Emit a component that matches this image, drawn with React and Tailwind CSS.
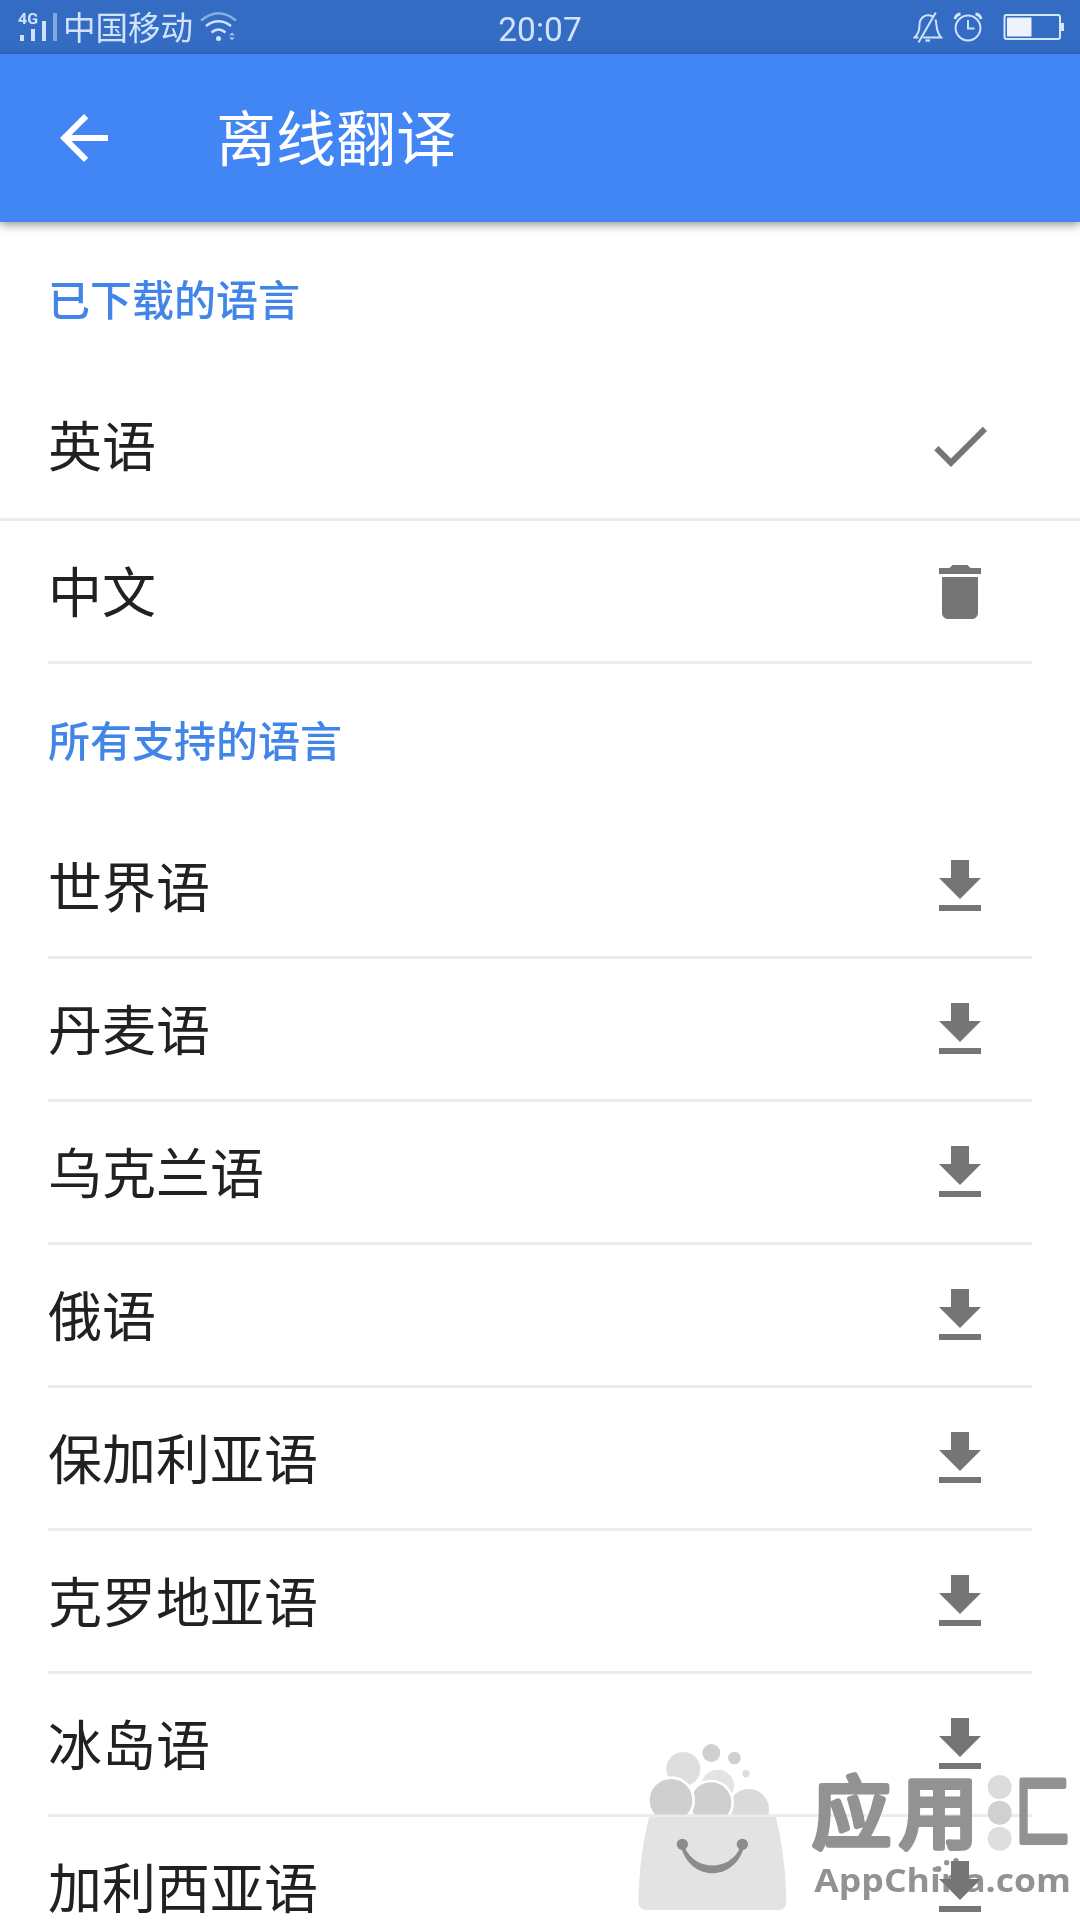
import React from 'react';
import { MdArrowBack, MdCheck, MdDelete, MdFileDownload } from 'react-icons/md';

const supportedLanguages = [
  '世界语',
  '丹麦语',
  '乌克兰语',
  '俄语',
  '保加利亚语',
  '克罗地亚语',
  '冰岛语',
  '加利西亚语',
];

const SignalIcon = () => (
  <svg width="40" height="54" viewBox="18 0 40 54" fill="#cfe3fc" className="shrink-0">
    <text x="18" y="24" fontSize="14" fontWeight="700" fontFamily="Roboto, sans-serif" textLength="20" lengthAdjust="spacingAndGlyphs">4G</text>
    <rect x="20" y="35" width="4" height="6" />
    <rect x="31" y="29" width="4" height="12" />
    <rect x="42" y="21" width="4" height="20" />
    <rect x="53" y="13" width="4" height="28" opacity="0.5" />
  </svg>
);

const WifiIcon = () => (
  <svg width="40" height="54" viewBox="199 0 40 54" fill="none" stroke="#cfe3fc" strokeWidth="2.6" className="ml-1.5 shrink-0">
    <path d="M201 20.5Q218.500 6 236 20.500" opacity="0.55" />
    <path d="M206 26Q218.500 16.500 231 26" />
    <path d="M211.500 32.500Q218.500 26.500 225.500 32.500" />
    <circle cx="218.500" cy="38.500" r="2.500" fill="#cfe3fc" stroke="none" />
    <path d="M229 35.200L232 32.800L235 35.200ZM229 37.500L232 40L235 37.500Z" fill="#cfe3fc" stroke="none" opacity="0.8" />
  </svg>
);

const MutedBellIcon = () => (
  <svg width="30" height="54" viewBox="913 0 30 54" fill="none" stroke="#cfe3fc" strokeWidth="2" className="shrink-0">
    <path d="M933 16.500C925 13 919.500 18 919.500 25C919.500 32 917.500 34 914.500 37.500H918.500" />
    <path d="M935.500 19.500C937 24 935.500 31 941 37.500H923" />
    <path d="M935.800 12.500L918.500 42.500" />
    <path d="M925.500 40.500H930" strokeWidth="2.200" />
  </svg>
);

const AlarmIcon = () => (
  <svg width="30" height="54" viewBox="953 0 30 54" fill="none" stroke="#cfe3fc" strokeWidth="2" className="shrink-0">
    <circle cx="968" cy="28" r="12.400" />
    <path d="M968 20V28.500H974.500" />
    <path d="M955 19Q956 14.500 960.500 14M981 19Q980 14.500 975.500 14" strokeWidth="3" />
  </svg>
);

const BatteryIcon = () => (
  <svg width="62" height="54" viewBox="1003 0 62 54" fill="none" stroke="#cfeafc" strokeWidth="2" className="shrink-0">
    <rect x="1004.500" y="15" width="55.500" height="24" rx="2" />
    <rect x="1007" y="17.500" width="24.500" height="19" fill="#eef2fb" stroke="none" />
    <rect x="1061" y="23" width="3" height="8" fill="#cfeafc" stroke="none" />
  </svg>
);

const StatusBar = () => (
  <div className="flex h-[54px] items-center justify-between bg-[#346bc3] pl-[18px] pr-[15px] text-[#cfe3fc]">
    <div className="flex w-[300px] items-center">
      <SignalIcon />
      <span className="ml-[5px] pb-0.5 text-[32.5px] leading-[52px]">中国移动</span>
      <WifiIcon />
    </div>
    <span className="pt-1.5 pr-[3px] font-[Roboto,sans-serif] text-[33.5px] leading-[48px]">20:07</span>
    <div className="flex w-[300px] items-center justify-end">
      <MutedBellIcon />
      <div className="mr-5 ml-[10px] flex">
        <AlarmIcon />
      </div>
      <BatteryIcon />
    </div>
  </div>
);

const SectionTitle = ({ children }) => (
  <h2 className="flex h-[152px] items-center px-12 pb-[3px] text-[42px] leading-none font-medium text-[#4285e8]">{children}</h2>
);

const LanguageRow = ({ name, icon: Icon }) => (
  <div className="mx-12 flex h-[140px] shrink-0 items-center justify-between pr-9">
    <span className="pb-[3px] text-[54px] leading-none text-[#212121]">{name}</span>
    <Icon className="mt-0.5 size-[72px] text-[#757575]" />
  </div>
);

const Watermark = () => (
  <svg
    className="absolute right-0 bottom-0 mix-blend-darken"
    width="460"
    height="200"
    viewBox="0 0 1380 600"
  >
    {/* bubbles */}
    <g stroke="#fff" strokeWidth="8">
      <circle cx="190" cy="147" r="55" fill="#dedede" />
      <circle cx="293" cy="198" r="53" fill="#e3e3e3" />
      <circle cx="386" cy="268" r="65" fill="#dadada" />
      <circle cx="273" cy="248" r="65" fill="#cfcfcf" />
      <circle cx="153" cy="241" r="68" fill="#cfcfcf" />
    </g>
    <circle cx="274" cy="99" r="27" fill="#d0d0d0" />
    <circle cx="343" cy="114" r="19" fill="#d0d0d0" />
    <circle cx="378" cy="161" r="11" fill="#dedede" />
    {/* bag */}
    <path d="M82 284H472L474 292H80Z" fill="#fff" />
    <path d="M88 290H467Q496 400 499 545Q499 570 474 570H80Q55 570 55 545Q58 400 88 290Z" fill="#e3e3e3" />
    <circle cx="187" cy="373" r="17" fill="#8c8c8c" />
    <circle cx="367" cy="373" r="17" fill="#8c8c8c" />
    <path d="M184 385C215 485 340 485 371 385L361 382C330 455 225 455 194 382Z" fill="#8c8c8c" />
    {/* wordmark */}
    <g fill="#929292" stroke="#929292" strokeWidth="18" strokeLinejoin="round" fontWeight="400" fontFamily="Noto Sans CJK SC, sans-serif">
      <text x="577" y="366" fontSize="236">应</text>
      <text x="838" y="366" fontSize="236">用</text>
      <text x="1184" y="362" fontSize="236" textLength="168" lengthAdjust="spacingAndGlyphs">匚</text>
    </g>
    <circle cx="1139" cy="201" r="36" fill="#dcdcdc" />
    <circle cx="1139" cy="278" r="36" fill="#d0d0d0" />
    <circle cx="1139" cy="356" r="36" fill="#dedede" />
    <text x="583" y="515" fontSize="97" fontWeight="700" fontFamily="Open Sans, sans-serif" fill="#929292" textLength="770" lengthAdjust="spacingAndGlyphs">AppChina.com</text>
    <circle cx="955" cy="447" r="9" fill="#929292" />
    <circle cx="980" cy="428" r="8" fill="#929292" />
    <circle cx="1008" cy="422" r="8" fill="#929292" />
  </svg>
);

const App = () => {
  return (
    <div className="relative flex h-[1920px] w-[1080px] flex-col overflow-hidden bg-white font-['Noto_Sans_CJK_SC',sans-serif]">
      <StatusBar />
      <header className="flex h-[168px] shrink-0 items-center bg-[#4285f4] px-12 text-white shadow-[0_3px_9px_rgba(0,0,0,0.4)]">
        <MdArrowBack className="size-[72px]" />
        <h1 className="ml-24 pb-[7px] text-[60px] leading-none">离线翻译</h1>
      </header>

      <main className="flex flex-1 flex-col">
        <div className="pt-px">
          <SectionTitle>已下载的语言</SectionTitle>
        </div>
        <LanguageRow name="英语" icon={MdCheck} />
        <div className="mt-[3px] h-[3px] bg-[#ececec]" />
        <LanguageRow name="中文" icon={MdDelete} />
        <div className="mx-12 h-[3px] bg-[#ececec]" />

        <SectionTitle>所有支持的语言</SectionTitle>
        {supportedLanguages.map((name) => (
          <React.Fragment key={name}>
            <LanguageRow name={name} icon={MdFileDownload} />
            <div className="mx-12 h-[3px] shrink-0 bg-[#ececec]" />
          </React.Fragment>
        ))}
      </main>

      <Watermark />
    </div>
  );
};

export default App;
